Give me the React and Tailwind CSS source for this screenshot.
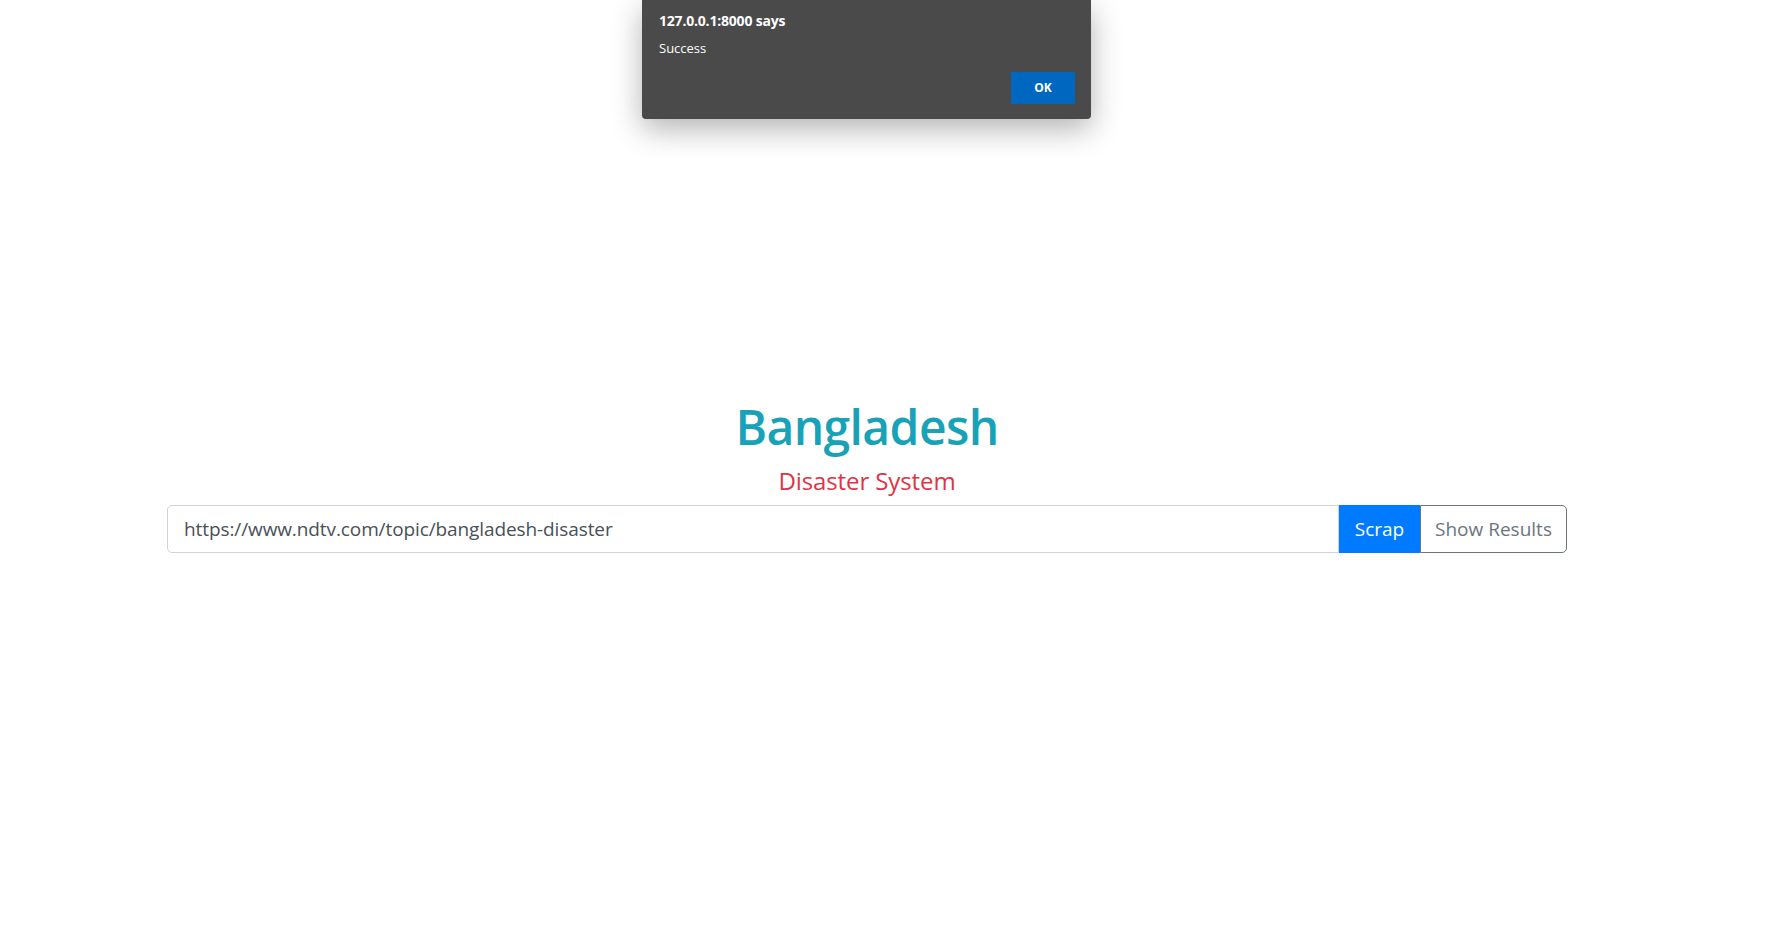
export default function App() {
  return (
    <div className="relative w-[1734px] h-[950px] bg-white overflow-hidden" style={{ fontFamily: '"Open Sans", "Noto Sans", sans-serif' }}>
      <div className="absolute top-0 left-[642px] w-[449px] h-[119px] bg-[#4a4a4a] rounded-b-[4px] shadow-[0_10px_30px_rgba(0,0,0,0.3)] text-white">
        <div className="pl-[17px] pt-[12px] text-[14px] font-bold leading-[18px] tracking-[-0.2px]">127.0.0.1:8000 says</div>
        <div className="pl-[17px] pt-[9px] text-[13px] leading-[18px]">Success</div>
        <div className="flex justify-end pr-[16px] pt-[15px]">
          <div className="w-[64px] h-[32px] bg-[#0067c0] flex items-center justify-center text-[12px] font-bold">OK</div>
        </div>
      </div>
      <div className="pt-[398px] flex flex-col items-center">
        <h1 className="text-[48px] leading-[58px] font-semibold text-[#17a2b8] tracking-[-0.6px]">Bangladesh</h1>
        <h4 className="mt-[8px] text-[24px] leading-[34px] text-[#dc3545] tracking-[-0.1px]">Disaster System</h4>
        <div className="mt-[7px] w-[1400px] flex h-[48px]">
          <div className="flex-1 border border-[#ced4da] rounded-l-[5px] flex items-center pl-[16px] text-[19px] text-[#495057] tracking-[-0.1px]">
            https://www.ndtv.com/topic/bangladesh-disaster
          </div>
          <div className="w-[81px] bg-[#007bff] text-white flex items-center justify-center text-[19px]">Scrap</div>
          <div className="w-[147px] border border-[#6c757d] rounded-r-[5px] text-[#6c757d] flex items-center justify-center text-[19px]">Show Results</div>
        </div>
      </div>
    </div>
  );
}
